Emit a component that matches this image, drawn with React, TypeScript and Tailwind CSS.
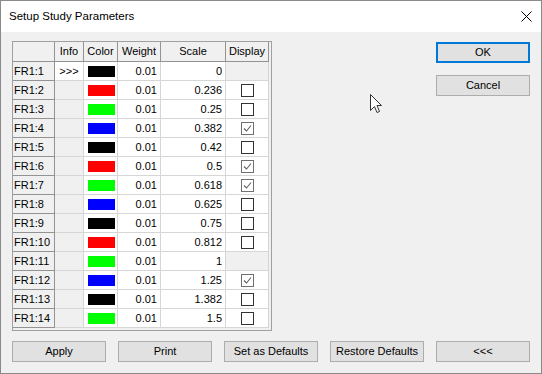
type Row = {
	name: string;
	info?: string;
	color: string;
	weight: string;
	scale: string;
	display: 'on' | 'off' | 'none';
};

const rows: Row[] = [
	{ name: 'FR1:1', info: '>>>', color: 'bg-[#000000]', weight: '0.01', scale: '0', display: 'none' },
	{ name: 'FR1:2', color: 'bg-[#ff0000]', weight: '0.01', scale: '0.236', display: 'off' },
	{ name: 'FR1:3', color: 'bg-[#00ff00]', weight: '0.01', scale: '0.25', display: 'off' },
	{ name: 'FR1:4', color: 'bg-[#0000ff]', weight: '0.01', scale: '0.382', display: 'on' },
	{ name: 'FR1:5', color: 'bg-[#000000]', weight: '0.01', scale: '0.42', display: 'off' },
	{ name: 'FR1:6', color: 'bg-[#ff0000]', weight: '0.01', scale: '0.5', display: 'on' },
	{ name: 'FR1:7', color: 'bg-[#00ff00]', weight: '0.01', scale: '0.618', display: 'on' },
	{ name: 'FR1:8', color: 'bg-[#0000ff]', weight: '0.01', scale: '0.625', display: 'off' },
	{ name: 'FR1:9', color: 'bg-[#000000]', weight: '0.01', scale: '0.75', display: 'off' },
	{ name: 'FR1:10', color: 'bg-[#ff0000]', weight: '0.01', scale: '0.812', display: 'off' },
	{ name: 'FR1:11', color: 'bg-[#00ff00]', weight: '0.01', scale: '1', display: 'none' },
	{ name: 'FR1:12', color: 'bg-[#0000ff]', weight: '0.01', scale: '1.25', display: 'on' },
	{ name: 'FR1:13', color: 'bg-[#000000]', weight: '0.01', scale: '1.382', display: 'off' },
	{ name: 'FR1:14', color: 'bg-[#00ff00]', weight: '0.01', scale: '1.5', display: 'off' },
];

const head = 'h-full flex items-center justify-center border-r border-b border-[#939393] bg-[#f0f0f0]';
const cell = 'h-full flex items-center border-r border-b border-[#d6d6d6] bg-white';

function Checkbox({ checked }: { checked: boolean }) {
	return (
		<div
			className={`w-[13px] h-[13px] border bg-white flex items-center justify-center ${
				checked ? 'border-[#707070]' : 'border-[#333333]'
			}`}
		>
			{checked && (
				<svg width="11" height="11" viewBox="0 0 11 11">
					<polyline points="2,5.5 4.5,8 9,2.5" fill="none" stroke="#606060" strokeWidth="1.1" />
				</svg>
			)}
		</div>
	);
}

function Button({ label, focused }: { label: string; focused?: boolean }) {
	return (
		<div
			className={`w-[94px] h-[21px] flex items-center justify-center bg-[#e1e1e1] text-black text-[11px] ${
				focused ? 'border-2 border-[#0078d7]' : 'border border-[#adadad]'
			}`}
		>
			{label}
		</div>
	);
}

export default function App() {
	return (
		<div
			className="relative w-[542px] h-[374px] flex flex-col border border-[#8a8a8a] bg-[#f0f0f0] text-black"
			style={{ fontFamily: '"Liberation Sans", Arial, sans-serif' }}
		>
			<div className="h-[31px] bg-white flex items-center justify-between pl-[8px] pr-[9px]">
				<span className="text-[11.5px]">Setup Study Parameters</span>
				<svg width="11" height="11" viewBox="0 0 11 11">
					<path d="M0.5 0.5 L10.5 10.5 M10.5 0.5 L0.5 10.5" stroke="#000" strokeWidth="1" />
				</svg>
			</div>

			<div className="flex-1 flex flex-col pt-[9px] pl-[11px] pr-[11px] pb-[11px]">
				<div className="flex flex-1 justify-between">
					<div className="w-[260px] h-[290px] border border-[#a0a0a0] bg-[#f0f0f0] text-[11px]">
						<div className="flex h-[20px]">
							<div className={`${head} w-[42px]`} />
							<div className={`${head} w-[29px]`}>Info</div>
							<div className={`${head} w-[34px]`}>Color</div>
							<div className={`${head} w-[43px]`}>Weight</div>
							<div className={`${head} w-[65px]`}>Scale</div>
							<div className={`${head} w-[43px]`}>Display</div>
						</div>
						{rows.map((r) => (
							<div key={r.name} className="flex h-[19px]">
								<div className={`${head} w-[42px] !justify-start pl-[1px]`}>{r.name}</div>
								<div
									className={`${cell} w-[29px] justify-center ${
										r.info ? '' : '!bg-[#f0f0f0]'
									}`}
								>
									{r.info}
								</div>
								<div className={`${cell} w-[34px] pl-[4px]`}>
									<div className={`w-[27px] h-[11px] ${r.color}`} />
								</div>
								<div className={`${cell} w-[43px] justify-end pr-[3px]`}>{r.weight}</div>
								<div className={`${cell} w-[65px] justify-end pr-[3px]`}>{r.scale}</div>
								<div
									className={`${cell} w-[43px] justify-center ${
										r.display === 'none' ? '!bg-[#f0f0f0]' : ''
									}`}
								>
									{r.display !== 'none' && <Checkbox checked={r.display === 'on'} />}
								</div>
							</div>
						))}
					</div>

					<div className="flex flex-col gap-[12px] pt-[1px]">
						<Button label="OK" focused />
						<Button label="Cancel" />
					</div>
				</div>

				<div className="flex justify-between">
					<Button label="Apply" />
					<Button label="Print" />
					<Button label="Set as Defaults" />
					<Button label="Restore Defaults" />
					<Button label="<<<" />
				</div>
			</div>

			<svg
				className="absolute left-[369px] top-[93px]"
				width="13"
				height="20"
				viewBox="0 0 13 20"
			>
				<path
					d="M0.5 0.5 L0.5 16.5 L4.5 12.5 L7 18.5 L9.5 17.5 L7 11.5 L11.5 11.5 Z"
					fill="#fff"
					stroke="#333"
					strokeWidth="1"
				/>
			</svg>
		</div>
	);
}
